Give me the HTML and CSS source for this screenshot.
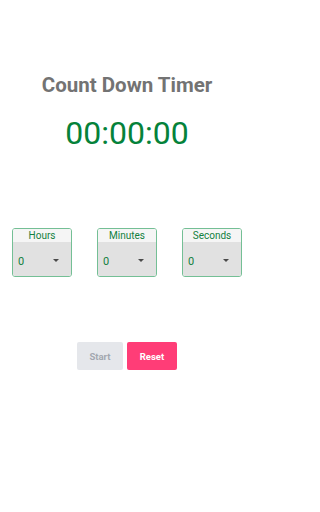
FILE: index.html
```html
<!DOCTYPE html>
<html>
<head>
<meta charset="utf-8">
<link rel="stylesheet" href="styles.css">
</head>
<body>
<div class="app">
  <h1 class="title">Count Down Timer</h1>
  <div class="time">00:00:00</div>
  <div class="pickers">
    <div class="picker">
      <div class="picker-label">Hours</div>
      <div class="picker-select"><span class="value">0</span><span class="arrow"></span></div>
    </div>
    <div class="picker">
      <div class="picker-label">Minutes</div>
      <div class="picker-select"><span class="value">0</span><span class="arrow"></span></div>
    </div>
    <div class="picker">
      <div class="picker-label">Seconds</div>
      <div class="picker-select"><span class="value">0</span><span class="arrow"></span></div>
    </div>
  </div>
  <div class="buttons">
    <button class="btn btn-start">Start</button>
    <button class="btn btn-reset">Reset</button>
  </div>
</div>
</body>
</html>
```
FILE: styles.css
```css
html, body {
  margin: 0;
  padding: 0;
  background: #ffffff;
}
body {
  font-family: Roboto, "Liberation Sans", sans-serif;
}
.app {
  width: 254px;
  display: flex;
  flex-direction: column;
  align-items: center;
  padding-top: 73px;
}
.title {
  margin: 0;
  font-size: 20.5px;
  line-height: 24px;
  font-weight: 700;
  color: #737373;
}
.time {
  margin-top: 17px;
  font-size: 32px;
  line-height: 38px;
  color: #05823a;
}
.pickers {
  margin-top: 76px;
  display: flex;
  gap: 25px;
}
.picker {
  width: 58px;
  height: 47px;
  border: 1px solid #74bf95;
  border-radius: 3px;
  overflow: hidden;
  display: flex;
  flex-direction: column;
}
.picker-label {
  height: 13px;
  line-height: 14px;
  font-size: 10px;
  text-align: center;
  color: #12803e;
  background: #f5f5f5;
}
.picker-select {
  flex: 1;
  background: #e1e1e1;
  display: flex;
  align-items: center;
  justify-content: space-between;
  padding: 5px 12px 0 5px;
}
.value {
  font-size: 11px;
  color: #12803e;
}
.arrow {
  width: 0;
  height: 0;
  border-left: 3px solid transparent;
  border-right: 3px solid transparent;
  border-top: 3px solid #4a4a4a;
  margin-top: -2px;
}
.buttons {
  margin-top: 65px;
  display: flex;
  gap: 4px;
}
.btn {
  height: 28px;
  border: none;
  border-radius: 2px;
  font-family: Roboto, "Liberation Sans", sans-serif;
  font-size: 9.5px;
  font-weight: 700;
  padding: 0;
}
.btn-start {
  width: 46px;
  background: #e5e7eb;
  color: #a3a7b0;
}
.btn-reset {
  width: 50px;
  background: #ff3d77;
  color: #ffffff;
}
```
